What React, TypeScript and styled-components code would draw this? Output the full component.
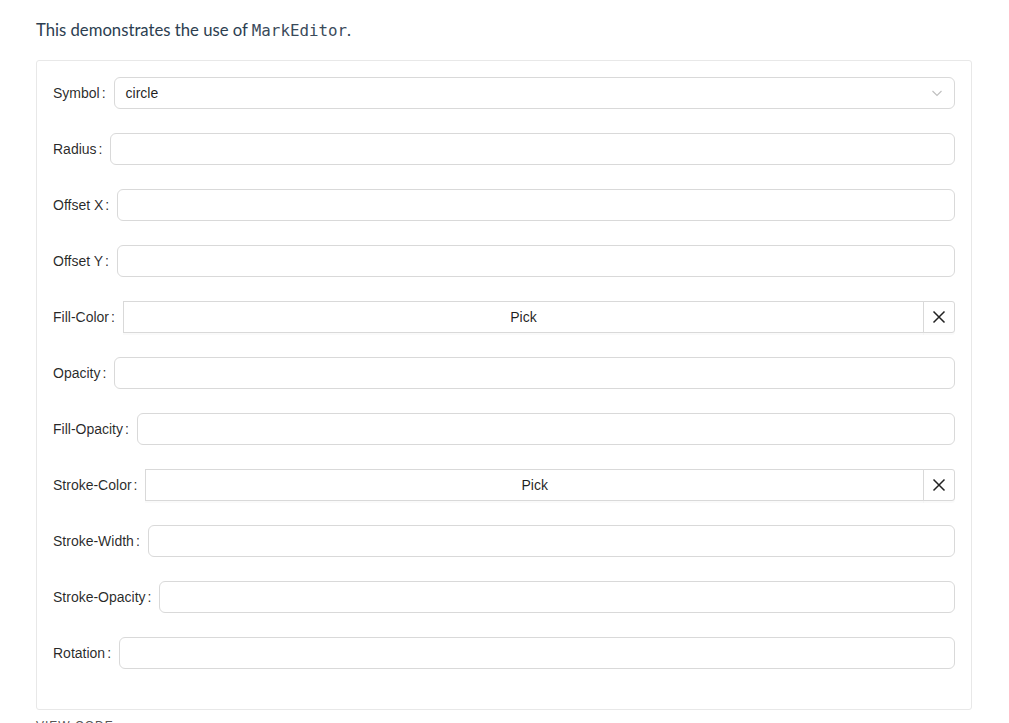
import styled, { createGlobalStyle } from 'styled-components';

const GlobalStyle = createGlobalStyle`
  body {
    margin: 0;
    background: #fff;
    font-family: 'Liberation Sans', Arial, sans-serif;
  }
`;

type Field = {
  label: string
  kind: 'select' | 'input' | 'color'
  value?: string
}

const fields: Field[] = [
  { label: 'Symbol', kind: 'select', value: 'circle' },
  { label: 'Radius', kind: 'input' },
  { label: 'Offset X', kind: 'input' },
  { label: 'Offset Y', kind: 'input' },
  { label: 'Fill-Color', kind: 'color' },
  { label: 'Opacity', kind: 'input' },
  { label: 'Fill-Opacity', kind: 'input' },
  { label: 'Stroke-Color', kind: 'color' },
  { label: 'Stroke-Width', kind: 'input' },
  { label: 'Stroke-Opacity', kind: 'input' },
  { label: 'Rotation', kind: 'input' },
];

function Chevron() {
  return (
    <svg width="12" height="12" viewBox="0 0 12 12" fill="none">
      <path d="M1.5 4 L6 8.5 L10.5 4" stroke="#bfbfbf" strokeWidth="1.1" />
    </svg>
  );
}

function Cross() {
  return (
    <svg width="14" height="14" viewBox="0 0 14 14" fill="none">
      <path d="M1.5 1.5 L12.5 12.5 M12.5 1.5 L1.5 12.5" stroke="#222" strokeWidth="1.5" />
    </svg>
  );
}

function Control({ field }: { field: Field }) {
  if (field.kind === 'select') {
    return (
      <Select>
        <span>{field.value}</span>
        <Chevron />
      </Select>
    );
  }
  if (field.kind === 'color') {
    return (
      <Compact>
        <PickButton>Pick</PickButton>
        <ClearButton><Cross /></ClearButton>
      </Compact>
    );
  }
  return <Input />;
}

export default function App() {
  return (
    <>
      <GlobalStyle />
      <Page>
        <Intro>
          This demonstrates the use of <Code>MarkEditor</Code>.
        </Intro>
        <Card>
          {fields.map(f => (
            <Row key={f.label}>
              <Label>{f.label}</Label>
              <Control field={f} />
            </Row>
          ))}
        </Card>
        <ViewCode>VIEW CODE</ViewCode>
      </Page>
    </>
  );
}

const Page = styled.div`
  width: 936px;
  margin-left: 36px;
  padding-top: 18px;
`;

const Intro = styled.p`
  height: 24px;
  margin: 0 0 18px;
  font-family: 'Lato', 'Noto Sans', sans-serif;
  font-size: 16.7px;
  line-height: 24px;
  color: #2c3e50;
`;

const Code = styled.code`
  font-family: 'DejaVu Sans Mono', monospace;
  font-size: 15.8px;
  line-height: 1;
  color: #3a4a5a;
`;

const Card = styled.div`
  border: 1px solid #e8e8e8;
  border-radius: 3px;
  padding: 16px 16px 16px;
`;

const Row = styled.div`
  display: flex;
  align-items: center;
  height: 32px;
  margin-bottom: 24px;
`;

const Label = styled.label`
  flex: none;
  font-size: 14px;
  color: rgba(0, 0, 0, 0.85);
  white-space: nowrap;

  &::after {
    content: ':';
    margin: 0 8px 0 2px;
  }
`;

const Input = styled.div`
  flex: 1;
  height: 32px;
  box-sizing: border-box;
  border: 1px solid #d9d9d9;
  border-radius: 6px;
  background: #fff;
`;

const Select = styled(Input)`
  display: flex;
  align-items: center;
  justify-content: space-between;
  padding: 0 11px;
  font-size: 14px;
  color: rgba(0, 0, 0, 0.88);
`;

const Compact = styled.div`
  flex: 1;
  display: flex;
  height: 32px;
`;

const PickButton = styled.button`
  flex: 1;
  height: 32px;
  border: 1px solid #d9d9d9;
  border-radius: 0;
  background: #fff;
  font-family: 'Liberation Sans', Arial, sans-serif;
  font-size: 14px;
  color: rgba(0, 0, 0, 0.88);
  box-shadow: 0 2px 0 rgba(0, 0, 0, 0.02);
  padding: 0;
`;

const ClearButton = styled.button`
  width: 32px;
  height: 32px;
  margin-left: -1px;
  display: flex;
  align-items: center;
  justify-content: center;
  border: 1px solid #d9d9d9;
  border-radius: 0 3px 3px 0;
  background: #fff;
  box-shadow: 0 2px 0 rgba(0, 0, 0, 0.02);
  padding: 0;
`;

const ViewCode = styled.div`
  margin-top: 9px;
  font-size: 12px;
  letter-spacing: 1px;
  color: #555;
`;
